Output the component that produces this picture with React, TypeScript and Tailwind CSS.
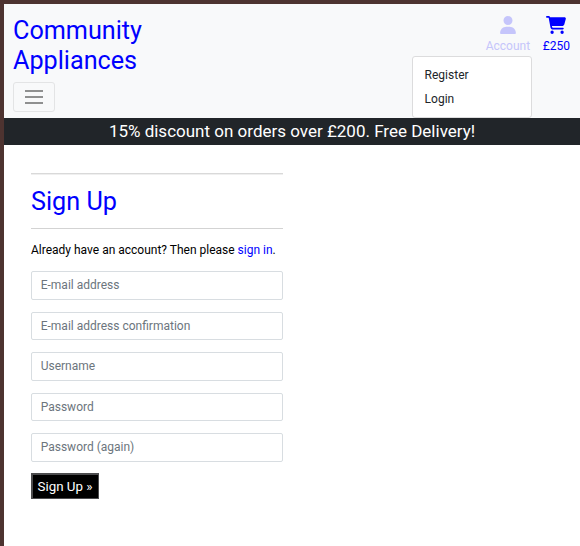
import { FaCartShopping, FaUser } from "react-icons/fa6";

const fields = [
  { label: "E-mail address", type: "email" },
  { label: "E-mail address confirmation", type: "email" },
  { label: "Username", type: "text" },
  { label: "Password", type: "password" },
  { label: "Password (again)", type: "password" },
];

function Header() {
  return (
    <header className="flex h-[114px] justify-between bg-[#f8f9fa] pl-[9px] pr-[10px]">
      <div className="pt-[12px]">
        <a href="#" className="block w-[140px] text-[25.2px] leading-[30px] text-[#0000ff]">
          Community Appliances
        </a>
        <button
          type="button"
          aria-label="Menu"
          className="mt-[6px] flex h-[30px] w-[42px] flex-col items-center justify-center gap-[4px] rounded-[3px] border border-[#e3e4e5]"
        >
          <span className="h-[2px] w-[18px] bg-[#8f9090]" />
          <span className="h-[2px] w-[18px] bg-[#8f9090]" />
          <span className="h-[2px] w-[18px] bg-[#8f9090]" />
        </button>
      </div>
      <nav className="flex items-start gap-[12.7px] pt-[12px] text-[12px] leading-[18px]">
        <div className="relative flex flex-col items-center text-[#c5c5fb]">
          <FaUser className="h-[18px] w-[16px]" />
          <span className="mt-[3px]">Account</span>
          <div className="absolute right-[-2px] top-[40px] h-[62px] w-[120px] rounded-[3px] border border-[#dcdcdd] bg-white px-[11.5px] py-[6px] text-[#212529]">
            <a href="#" className="block leading-[24px]">Register</a>
            <a href="#" className="block leading-[24px]">Login</a>
          </div>
        </div>
        <div className="flex flex-col items-center text-[#0000ff]">
          <FaCartShopping className="h-[18px] w-[20px]" />
          <span className="mt-[3px]">£250</span>
        </div>
      </nav>
    </header>
  );
}

export default function App() {
  return (
    <div className="h-[546px] overflow-hidden border-l-4 border-t-4 border-[#4d3330] bg-white font-['Roboto',sans-serif] text-[12px] leading-[18px] text-black">
      <Header />
      <div className="h-[27px] bg-[#212529] text-center text-[17px] leading-[27px] text-white">
        15% discount on orders over £200. Free Delivery!
      </div>
      <main className="ml-[27px] mt-[28px] w-[252px]">
        <hr className="h-[2px] border-t border-[#d9d9d9] bg-[#efefef]" />
        <h1 className="mt-[12px] text-[25.2px] leading-[30px] text-[#0000ff]">Sign Up</h1>
        <hr className="mt-[11px] border-t border-[#d3d3d3]" />
        <p className="mt-[12px] whitespace-nowrap">
          Already have an account? Then please{" "}
          <a href="#" className="text-[#0000ff]">sign in</a>.
        </p>
        <form className="mt-[12px]">
          <div className="flex flex-col gap-[12px]">
            {fields.map((field) => (
              <input
                key={field.label}
                type={field.type}
                placeholder={field.label}
                className="h-[28.5px] w-full rounded-[2px] border border-[#d8dde1] bg-white px-[8.7px] text-[12px] placeholder:text-[#6c757d]"
              />
            ))}
          </div>
          <button
            type="button"
            className="mt-[11px] h-[26px] w-[68px] whitespace-nowrap border-l-2 border-t-2 border-r border-b border-[#4c4c4e] bg-black pr-px text-[13.333px] leading-[23px] text-white"
          >
            Sign Up »
          </button>
        </form>
      </main>
    </div>
  );
}
